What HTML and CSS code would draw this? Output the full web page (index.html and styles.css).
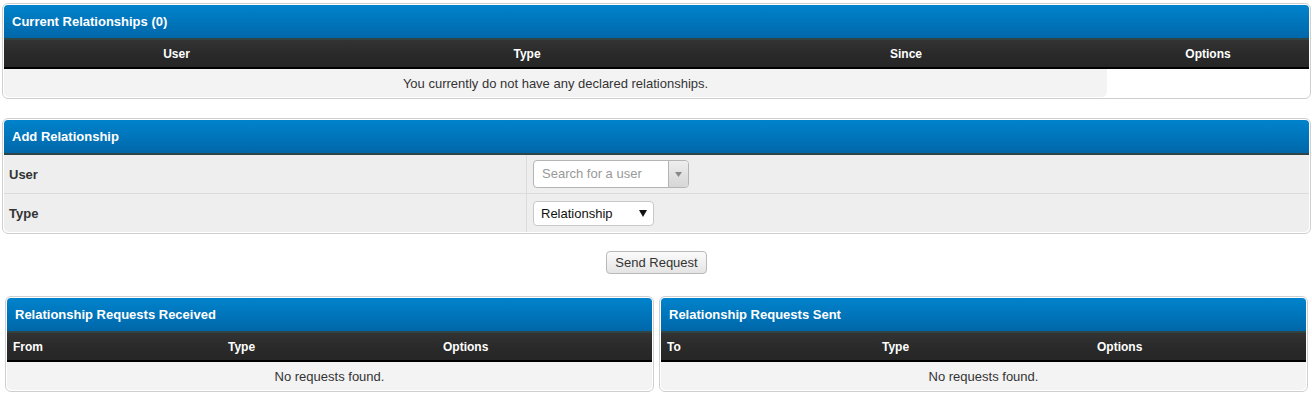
FILE: index.html
```html
<!DOCTYPE html>
<html lang="en">
<head>
    <meta charset="UTF-8">
    <title>Relationships</title>
    <link rel="stylesheet" href="styles.css">
</head>
<body>
    <div class="page">
        <div class="panel">
            <div class="panel-head">Current Relationships (0)</div>
            <table class="grid">
                <thead>
                    <tr>
                        <th class="col-user">User</th>
                        <th class="col-type">Type</th>
                        <th class="col-since">Since</th>
                        <th>Options</th>
                    </tr>
                </thead>
                <tbody>
                    <tr>
                        <td colspan="3" class="empty">You currently do not have any declared relationships.</td>
                        <td class="blank"></td>
                    </tr>
                </tbody>
            </table>
        </div>

        <div class="panel panel-form">
            <div class="panel-head">Add Relationship</div>
            <table class="form">
                <tr>
                    <td class="label">User</td>
                    <td class="field">
                        <div class="search-box">
                            <span class="placeholder">Search for a user</span>
                            <span class="search-arrow">
                                <svg width="7" height="5" viewBox="0 0 7 5"><path d="M0 0h7L3.5 5z" fill="#888"/></svg>
                            </span>
                        </div>
                    </td>
                </tr>
                <tr>
                    <td class="label">Type</td>
                    <td class="field">
                        <div class="select-box">
                            <span>Relationship</span>
                            <svg width="8" height="7" viewBox="0 0 8 7"><path d="M0 0h8L4 7z" fill="#111"/></svg>
                        </div>
                    </td>
                </tr>
            </table>
        </div>

        <div class="actions">
            <button class="btn">Send Request</button>
        </div>

        <div class="requests">
            <div class="panel">
                <div class="panel-head">Relationship Requests Received</div>
                <table class="grid grid-left">
                    <thead>
                        <tr>
                            <th>From</th>
                            <th>Type</th>
                            <th>Options</th>
                        </tr>
                    </thead>
                    <tbody>
                        <tr>
                            <td colspan="3" class="empty">No requests found.</td>
                        </tr>
                    </tbody>
                </table>
            </div>
            <div class="panel">
                <div class="panel-head">Relationship Requests Sent</div>
                <table class="grid grid-left">
                    <thead>
                        <tr>
                            <th>To</th>
                            <th>Type</th>
                            <th>Options</th>
                        </tr>
                    </thead>
                    <tbody>
                        <tr>
                            <td colspan="3" class="empty">No requests found.</td>
                        </tr>
                    </tbody>
                </table>
            </div>
        </div>
    </div>
</body>
</html>
```

FILE: styles.css
```css
body {
    margin: 0;
    font-family: "Liberation Sans", Arial, sans-serif;
    font-size: 13px;
    color: #333;
    background-color: #fff;
}
.page {
    padding: 3px 1px 0 2px;
}
.panel {
    border: 1px solid #cfcfcf;
    border-radius: 6px;
    padding: 1px;
    background-color: #fff;
}
.panel-head {
    height: 33px;
    line-height: 33px;
    padding: 0 8px;
    background: linear-gradient(to bottom, #0083cc, #0067a9);
    border-bottom: 2px solid #2f4545;
    border-radius: 4px 4px 0 0;
    color: #fff;
    font-weight: bold;
}
table {
    border-collapse: collapse;
    width: 100%;
    table-layout: fixed;
}
.grid th {
    height: 27px;
    padding: 0 6px;
    background: linear-gradient(to bottom, #333333, #2a2a2a 50%, #262626);
    border-bottom: 2px solid #000;
    color: #fff;
    font-weight: bold;
    font-size: 12px;
    text-align: center;
}
.grid .col-user {
    width: 333px;
}
.grid .col-type {
    width: 344px;
}
.grid .col-since {
    width: 390px;
}
.grid td {
    height: 28px;
    padding: 0 6px;
}
.grid .empty {
    background-color: #f3f3f3;
    text-align: center;
    border-radius: 0 0 5px 5px;
}
.grid-left th {
    text-align: left;
}
.panel-form {
    margin-top: 19px;
}
.form td {
    height: 38px;
    background-color: #eeeeee;
    border-bottom: 1px solid #dcdcdc;
}
.form tr:last-child td {
    border-bottom: none;
}
.form .label {
    width: 512px;
    padding: 0 5px;
    font-weight: bold;
    border-right: 1px solid #dcdcdc;
}
.form .field {
    padding: 0 6px;
}
.form tr:last-child .label {
    border-radius: 0 0 0 5px;
}
.form tr:last-child .field {
    border-radius: 0 0 5px 0;
}
.search-box {
    display: flex;
    width: 156px;
    height: 28px;
    box-sizing: border-box;
    border: 1px solid #b4b4b4;
    border-radius: 4px;
    background-color: #fff;
    overflow: hidden;
}
.placeholder {
    flex: 1;
    padding-left: 8px;
    line-height: 26px;
    color: #999;
}
.search-arrow {
    width: 19px;
    display: flex;
    align-items: center;
    justify-content: center;
    border-left: 1px solid #b4b4b4;
    background: linear-gradient(to bottom, #eeeeee, #d6d6d6);
}
.select-box {
    display: flex;
    align-items: center;
    justify-content: space-between;
    width: 121px;
    height: 25px;
    box-sizing: border-box;
    padding: 0 6px 0 7px;
    border: 1px solid #c8c8c8;
    border-radius: 4px;
    background-color: #fff;
    color: #111;
}
.actions {
    text-align: center;
    margin-top: 17px;
}
.btn {
    width: 101px;
    height: 23px;
    padding: 0;
    font-family: "Liberation Sans", Arial, sans-serif;
    font-size: 13px;
    color: #333;
    border: 1px solid #b9b9b9;
    border-radius: 4px;
    background: linear-gradient(to bottom, #fbfbfb, #e4e4e4);
    cursor: pointer;
}
.requests {
    display: grid;
    grid-template-columns: 1fr 1fr;
    gap: 5px;
    margin: 22px 3px 0 3px;
}
```
